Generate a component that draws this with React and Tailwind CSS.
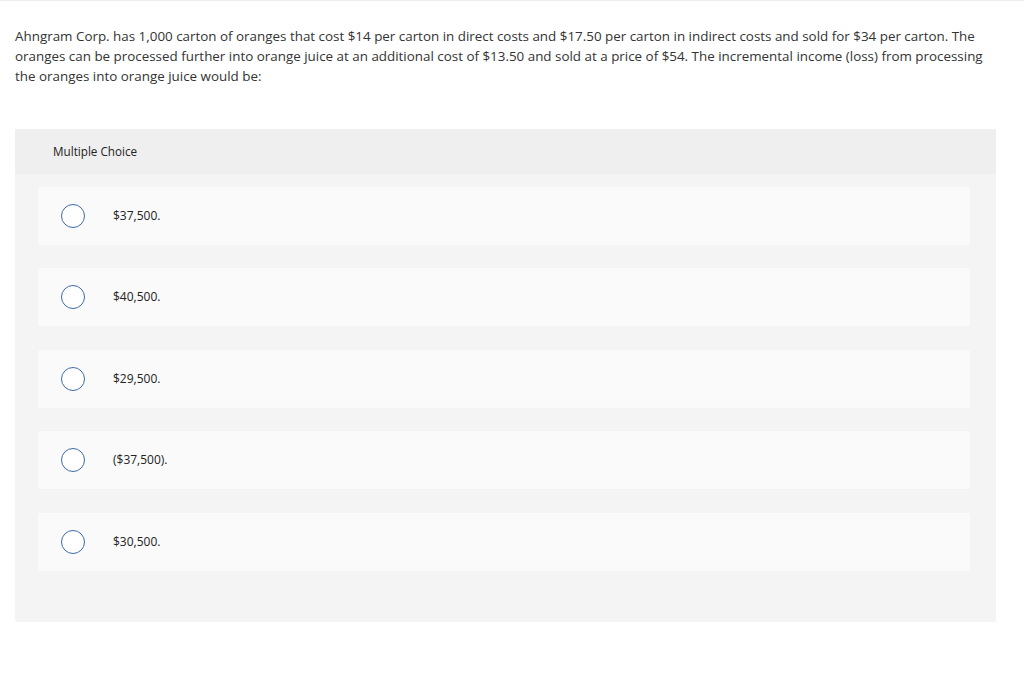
export default function App() {
	const choices = ["$37,500.", "$40,500.", "$29,500.", "($37,500).", "$30,500."];

	return (
		<div className="min-h-[681px] bg-white border-t border-[#ececec] px-[15px] pt-[25px]" style={{ fontFamily: "'Open Sans', Lato, sans-serif" }}>
			<p className="text-[13.4px] leading-[20px] text-[#333] max-w-[985px]">
				Ahngram Corp. has 1,000 carton of oranges that cost $14 per carton in direct costs and $17.50 per carton in indirect costs and sold for $34 per carton. The oranges can be processed further into orange juice at an additional cost of $13.50 and sold at a price of $54. The incremental income (loss) from processing the oranges into orange juice would be:
			</p>

			<div className="mt-[43px] w-[981px] bg-[#f4f4f4] rounded-[2px] pb-[51px]">
				<div className="h-[45px] bg-[#efefef] flex items-center px-[38px] text-[11.7px] text-[#222]">
					Multiple Choice
				</div>
				<div className="flex flex-col gap-[23.4px] px-[23px] pt-[13px] pr-[26px]">
					{choices.map((c) => (
						<div key={c} className="h-[58px] bg-[#fafafa] rounded-[2px] flex items-center pl-[23px]">
							<span className="w-[24px] h-[24px] rounded-full border border-[#3d6aa8] bg-white shrink-0" />
							<span className="ml-[28px] text-[12px] text-[#222]">{c}</span>
						</div>
					))}
				</div>
			</div>
		</div>
	);
}
